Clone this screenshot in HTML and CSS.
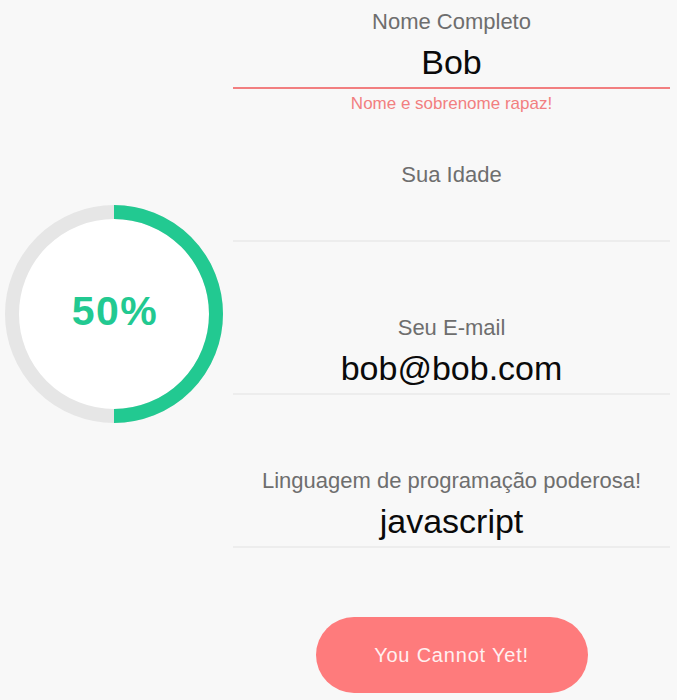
FILE: index.html
```html
<!DOCTYPE html>
<html lang="pt">
<head>
<meta charset="utf-8">
<title>Formulário</title>
<link rel="stylesheet" href="styles.css">
</head>
<body>
<div class="layout">
  <aside class="progress-col">
    <div class="progress">
      <svg class="ring" width="218" height="218" viewBox="0 0 218 218">
        <circle cx="109" cy="109" r="102" fill="#ffffff" stroke="#e6e6e6" stroke-width="14"/>
        <path d="M109 7 A102 102 0 0 1 109 211" fill="none" stroke="#22c991" stroke-width="14"/>
      </svg>
      <div class="percent">50%</div>
    </div>
  </aside>
  <main class="form-col">
    <div class="fields">
      <div class="field">
        <div class="label">Nome Completo</div>
        <div class="value invalid">Bob</div>
        <div class="error">Nome e sobrenome rapaz!</div>
      </div>
      <div class="field">
        <div class="label">Sua Idade</div>
        <div class="value"></div>
        <div class="error"></div>
      </div>
      <div class="field">
        <div class="label">Seu E-mail</div>
        <div class="value">bob@bob.com</div>
        <div class="error"></div>
      </div>
      <div class="field">
        <div class="label">Linguagem de programação poderosa!</div>
        <div class="value">javascript</div>
        <div class="error"></div>
      </div>
    </div>
    <div class="actions">
      <button class="submit" type="button">You Cannot Yet!</button>
    </div>
  </main>
</div>
</body>
</html>
```
FILE: styles.css
```css
html, body {
  margin: 0;
  padding: 0;
  background: #f8f8f8;
  font-family: "Liberation Sans", Arial, sans-serif;
}

.layout {
  display: flex;
  gap: 10px;
  padding: 0 7px 0 5px;
}

.progress-col {
  flex: none;
  width: 218px;
  padding-top: 205px;
}

.progress {
  position: relative;
  width: 218px;
  height: 218px;
}

.ring {
  display: block;
}

.percent {
  position: absolute;
  inset: 0;
  display: flex;
  align-items: center;
  justify-content: center;
  padding: 0 0 6px 2px;
  font-size: 41px;
  font-weight: bold;
  letter-spacing: 1.5px;
  color: #22c991;
}

.form-col {
  flex: 1;
  min-width: 0;
}

.fields {
  display: flex;
  flex-direction: column;
  gap: 48px;
  padding-top: 9px;
}

.field {
  text-align: center;
}

.label {
  font-size: 22px;
  line-height: 26px;
  color: #6e6e6e;
}

.value {
  margin-top: 7px;
  height: 40px;
  padding-bottom: 5px;
  font-size: 34px;
  line-height: 40px;
  color: #0a0a0a;
  border-bottom: 2px solid #ededed;
}

.value.invalid {
  border-bottom-color: #f27f80;
}

.error {
  margin-top: 5px;
  height: 20px;
  font-size: 17px;
  line-height: 20px;
  color: #f27f80;
}

.actions {
  display: flex;
  justify-content: center;
  padding-top: 44px;
}

.submit {
  width: 272px;
  height: 76px;
  border: none;
  border-radius: 38px;
  background: #fe7b7c;
  color: #fff0f0;
  font-family: "Liberation Sans", Arial, sans-serif;
  font-size: 20px;
  letter-spacing: 0.8px;
  cursor: pointer;
}
```
